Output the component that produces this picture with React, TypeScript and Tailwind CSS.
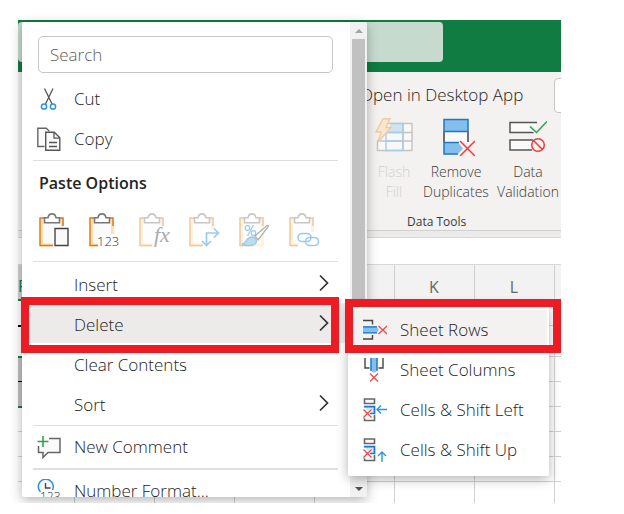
import React from "react";

type IconProps = { children: React.ReactNode; w: number; h: number };

function Icon({ children, w, h }: IconProps) {
  return (
    <svg width={w} height={h} viewBox={`0 0 ${w} ${h}`} fill="none" aria-hidden="true" className="block shrink-0">
      {children}
    </svg>
  );
}

const CutIcon = () => (
  <Icon w={24} h={24}>
    <path d="M7.5 1.5 15 17M16 1.5 8.500 17" stroke="#555" strokeWidth="1.300" />
    <circle cx="7" cy="19.500" r="2.600" stroke="#2b95d9" strokeWidth="1.500" />
    <circle cx="16" cy="19.500" r="2.600" stroke="#2b95d9" strokeWidth="1.500" />
  </Icon>
);

const CopyIcon = () => (
  <Icon w={24} h={24}>
    <path d="M7.500 19.500H.8V1.200h8.500l3 3" fill="#fafafa" stroke="#666" strokeWidth="1.400" />
    <path d="M8.700 5.200h8.600l5.500 5.500v12.500H8.700z" fill="#fafafa" stroke="#555" strokeWidth="1.400" />
    <path d="M17 5.500v5.700h5.500M12 15.500h8M12 19.500h8" stroke="#555" strokeWidth="1.300" />
  </Icon>
);

const CommentIcon = () => (
  <Icon w={24} h={24}>
    <path d="M12 3.500h11v14H11l-5 5v-5H1.500V11" fill="#fafafa" stroke="#666" strokeWidth="1.500" />
    <path d="M6.500 0v12M0 6.500h12" stroke="#fff" strokeWidth="4" />
    <path d="M6 1v11M.5 6.500h11" stroke="#2ea052" strokeWidth="1.600" />
  </Icon>
);

const NumberIcon = () => (
  <Icon w={24} h={24}>
    <path d="M3.500 13A7.500 7.500 0 1 1 15.500 11" fill="#fafafa" stroke="#2b95d9" strokeWidth="1.500" />
    <path d="M8.500 4v5h5" stroke="#444" strokeWidth="1.400" />
    <text x="3" y="22" fontSize="12" fill="#333" className="font-['Open_Sans',sans-serif]">123</text>
  </Icon>
);

function Clipboard({ children, faded }: { children: React.ReactNode; faded?: boolean }) {
  return (
    <Icon w={32} h={36}>
      <g opacity={faded ? 0.42 : 1}>
        <path d="M2.500 6h21v26h-21z" fill="#fafafa" stroke="#fde0b0" strokeWidth="3" />
        <path d="M6 5H1v27.500h13M19.500 5H24v8" stroke="#e07b1a" strokeWidth="1.500" />
        <path d="M5.500 4.700h3.500C9.500 2 11 .9 13 .9s3.500 1.100 4 3.800h3.500v5h-15z" fill="#fff" stroke="#777" strokeWidth="1.600" />
      </g>
      {children}
    </Icon>
  );
}

const pasteOptions: { label: string; faded?: boolean; art: React.ReactNode }[] = [
  {
    label: "Paste",
    art: (
      <>
        <path d="M14 13h18v23H14z" fill="#fff" />
        <path d="M16 15.500h13v17H16z" fill="#fafafa" stroke="#444" strokeWidth="1.400" />
      </>
    ),
  },
  {
    label: "Paste values",
    art: (
      <>
        <path d="M9 21h23v15H9z" fill="#fff" />
        <text x="8" y="33" fontSize="13" fill="#333" className="font-['Open_Sans',sans-serif]">123</text>
      </>
    ),
  },
  {
    label: "Paste formulas",
    faded: true,
    art: (
      <>
        <path d="M15 14h17v22H13z" fill="#fff" />
        <text x="15" y="29" fontSize="22" fontStyle="italic" fill="#aaa" className="font-['Liberation_Serif',serif]">fx</text>
      </>
    ),
  },
  {
    label: "Transpose",
    faded: true,
    art: (
      <>
        <path d="M14 16h18v20H14z" fill="#fff" />
        <path d="M17.500 32V20H29M13 28l4.500 4.500L22 28M25 15.500l4.500 4.500-4.500 4.500" stroke="#9ccbea" strokeWidth="1.700" />
      </>
    ),
  },
  {
    label: "Paste formatting",
    faded: true,
    art: (
      <>
        <circle cx="8.500" cy="15" r="2.300" stroke="#9ccbea" strokeWidth="1.200" />
        <circle cx="14.500" cy="20" r="2.300" stroke="#9ccbea" strokeWidth="1.200" />
        <path d="M14.500 12 8.500 23" stroke="#9ccbea" strokeWidth="1.200" />
        <path d="M16 23 28 12.500q2-.5 1 1.500L19 27z" fill="#fff" stroke="#b0b0b0" strokeWidth="1.300" />
        <path d="M3 31c4 0 4-7 10-7 4 0 6 4 3 7-3 2-9 2-13 0z" fill="#bcdcf2" stroke="#9ccbea" strokeWidth="1.400" />
      </>
    ),
  },
  {
    label: "Paste link",
    faded: true,
    art: (
      <>
        <path d="M9 19h22v16H9z" fill="#fff" />
        <rect x="9" y="20.500" width="13" height="8" rx="4" stroke="#9ccbea" strokeWidth="1.600" />
        <rect x="16.500" y="24.500" width="13" height="8" rx="4" stroke="#9ccbea" strokeWidth="1.600" />
      </>
    ),
  },
];

const Chevron = () => (
  <Icon w={12} h={18}>
    <path d="m2 1.500 7.500 7.500L2 16.500" stroke="#333" strokeWidth="1.700" />
  </Icon>
);

const DeleteRowsIcon = () => (
  <Icon w={24} h={24}>
    <path d="M0 2.500h9.500v4M0 21h9.500v-4" stroke="#444" strokeWidth="1.400" />
    <path d="M0 8.500h13.500l2.500 3.300-2.500 3.200H0z" fill="#83beec" />
    <path d="M0 8.800h14M0 14.800h14" stroke="#1a6fb8" strokeWidth="1.300" />
    <path d="m15.500 8 8.500 8M24 8l-8.500 8" stroke="#ee4b4b" strokeWidth="1.300" />
  </Icon>
);

const DeleteColumnsIcon = () => (
  <Icon w={24} h={26}>
    <path d="M2 1v10h4.500M20 1v10h-4.500" stroke="#444" strokeWidth="1.400" />
    <path d="M7.500 1v12l3.500 3 3.500-3V1z" fill="#83beec" />
    <path d="M8 1v13M14 1v13" stroke="#1a6fb8" strokeWidth="1.300" />
    <path d="m7 16.500 8 8M15 16.500l-8 8" stroke="#ee4b4b" strokeWidth="1.300" />
  </Icon>
);

function CellsIcon({ arrow }: { arrow: string }) {
  return (
    <Icon w={24} h={24}>
      <path d="M1.500 1h10v4.500h-10zM1.500 17v5.500h10V17" fill="#fff" stroke="#666" strokeWidth="1.600" />
      <path d="M1 8.700h10.500v6.800H7" fill="#cde6f8" stroke="#1a76c6" strokeWidth="1.700" />
      <path d="m.5 11.500 8 8M8.500 11.500l-8 8" stroke="#fff" strokeWidth="3" />
      <path d="m.5 11.500 8 8M8.500 11.500l-8 8" stroke="#ee4b4b" strokeWidth="1.400" />
      <path d={arrow} stroke="#2b95d9" strokeWidth="1.400" />
    </Icon>
  );
}

const FlashFillIcon = () => (
  <Icon w={38} h={38}>
    <path d="M12 5.500h25v27H2.500V22" fill="#f8f8f8" stroke="#c4c4c4" strokeWidth="1.400" />
    <path d="M16 5.500h12v9H11z" fill="#cfe3f1" />
    <path d="M2.500 23H37M9 14.500h28M28 5.500v27" stroke="#c4c4c4" strokeWidth="1.400" />
    <path d="M11 32.500v-18h17v18zM11 23h17M16 5.500h12v9" stroke="#a9cbe4" strokeWidth="1.400" />
    <path d="M8 .8h7L11 9.500h5L3 24l3-10H1z" fill="#fae6cb" stroke="#f0c9a6" strokeWidth="1.400" />
  </Icon>
);

const RemoveDuplicatesIcon = () => (
  <Icon w={38} h={38}>
    <path d="M7 1.500h24v12H7zM7 24.500h14l5 6-5 5.500H7z" fill="#83beec" />
    <path d="M7 13.500h24v11H7z" fill="#fafafa" />
    <path d="M31 24V13.500M7 13.500v11" stroke="#444" strokeWidth="1.500" />
    <path d="M7 1.500h24v12H7zM22 24.500H7V36h14" stroke="#1f78c1" strokeWidth="1.500" />
    <path d="m23 23 15 15M38 23 23 38" stroke="#ee3b3b" strokeWidth="1.500" />
  </Icon>
);

const DataValidationIcon = () => (
  <Icon w={38} h={38}>
    <path d="M28 4.500H1v10h24M24 22H1v10h22" fill="#fafafa" stroke="#555" strokeWidth="1.500" />
    <path d="m21 8.500 6.500 6L38 3.500" stroke="#f3f2f1" strokeWidth="4" />
    <path d="m21 8.500 6.500 6L38 3.500" stroke="#2ea052" strokeWidth="1.500" />
    <circle cx="29" cy="27" r="6.300" fill="#f3f2f1" stroke="#ee3b3b" strokeWidth="1.500" />
    <path d="m24.500 22.500 9 9" stroke="#ee3b3b" strokeWidth="1.500" />
  </Icon>
);

function Tool({ icon, lines, disabled, width }: { icon: React.ReactNode; lines: string[]; disabled?: boolean; width: string }) {
  return (
    <button
      type="button"
      disabled={disabled}
      className={`flex shrink-0 flex-col items-center text-sm leading-5 whitespace-nowrap ${width} ${disabled ? "text-[#d2d0ce]" : "text-[#3b3a39]"}`}
    >
      {icon}
      <span className="mt-1.5 flex flex-col items-center">
        {lines.map((l) => (
          <span key={l}>{l}</span>
        ))}
      </span>
    </button>
  );
}

function MenuItem({ icon, label, more, active, height = "h-10" }: { icon?: React.ReactNode; label: string; more?: boolean; active?: boolean; height?: string }) {
  return (
    <button
      type="button"
      className={`flex w-full shrink-0 items-center pr-5 pl-[15px] text-left text-[17px] ${height} ${active ? "bg-[#edebe9]" : ""}`}
    >
      <span className="w-[37px] shrink-0">{icon}</span>
      <span className={`grow ${icon ? "" : "pt-[3px]"}`}>{label}</span>
      {more && <Chevron />}
    </button>
  );
}

const Divider = ({ thick }: { thick?: boolean }) => (
  <hr className={`mr-3 ml-[11px] shrink-0 border-[#e1dfdd] ${thick ? "border-t-2" : ""}`} />
);

function SubItem({ icon, label, active }: { icon: React.ReactNode; label: string; active?: boolean }) {
  return (
    <button type="button" className={`flex h-10 w-full items-center gap-[13px] pl-[15px] text-left text-[17px] whitespace-nowrap ${active ? "bg-[#f3f2f1]" : ""}`}>
      {icon}
      <span>{label}</span>
    </button>
  );
}

const rowStyles = [
  "h-[26px] border-b-2 border-b-black",
  "h-[31px] border-b-2 border-b-[#107c41]",
  "h-[25px] border-b border-b-black bg-[#c0c0c0]",
  "h-[25px] border-b-2 border-b-[#107c41] bg-[#c0c0c0]",
  "h-[25px] border-b border-[#d0d0d0]",
  "h-[25px] border-b border-[#d0d0d0]",
  "h-[25px] border-b border-[#d0d0d0]",
  "h-[25px] border-b border-[#d0d0d0]",
];

function Sheet() {
  return (
    <table className="w-full table-fixed border-collapse bg-white">
      <colgroup>
        <col className="w-14" />
        {[0, 1, 2, 3, 4, 5].map((c) => (
          <col key={c} className="w-20" />
        ))}
        <col />
      </colgroup>
      <thead>
        <tr className="h-[34px] bg-[#f2f2f2] text-base text-[#666]">
          <th className="border-b-2 border-b-[#107c41] bg-[#d2d2d2] pt-2 text-left font-normal text-[#107c41]">F</th>
          {["", "", "", "", "K", "L", ""].map((h, i) => (
            <th key={i} className="border-b border-l border-[#d0d0d0] pt-2.5 font-normal">
              {h}
            </th>
          ))}
        </tr>
      </thead>
      <tbody>
        {rowStyles.map((cls, r) => (
          <tr key={r}>
            <td className={cls} />
            {[0, 1, 2, 3, 4, 5, 6].map((c) => (
              <td key={c} className="border-b border-l border-[#d0d0d0]" />
            ))}
          </tr>
        ))}
      </tbody>
    </table>
  );
}

function ContextMenu() {
  return (
    <div className="absolute top-[2px] left-1 flex h-[475px] w-[345px] overflow-hidden rounded-xs bg-white shadow-[0_3px_12px_rgba(0,0,0,0.3)]">
      <div className="flex min-w-0 grow flex-col">
        <input
          type="text"
          aria-label="Search"
          placeholder="Search"
          className="mr-[17px] mt-3.5 mb-1.5 ml-4 h-[37px] shrink-0 rounded-[5px] border border-[#c8c6c4] px-[11px] text-[17px] outline-none placeholder:text-[#605e5c]"
        />
        <MenuItem icon={<CutIcon />} label="Cut" />
        <MenuItem icon={<CopyIcon />} label="Copy" />
        <div className="mt-px flex shrink-0 flex-col">
          <Divider />
          <h2 className="mt-2 shrink-0 px-[17px] text-base leading-7 font-semibold text-[#252423]">Paste Options</h2>
          <div className="mt-4 mb-3 flex shrink-0 gap-[18px] px-[17px]">
            {pasteOptions.map((p) => (
              <button key={p.label} type="button" aria-label={p.label} disabled={p.faded}>
                <Clipboard faded={p.faded}>{p.art}</Clipboard>
              </button>
            ))}
          </div>
          <Divider />
        </div>
        <div className="shrink-0 pt-px pb-0.5">
          <MenuItem label="Insert" more />
          <MenuItem label="Delete" more active />
          <MenuItem label="Clear Contents" />
          <MenuItem label="Sort" more />
        </div>
        <Divider />
        <MenuItem icon={<CommentIcon />} label="New Comment" height="h-[42px]" />
        <Divider thick />
        <MenuItem icon={<NumberIcon />} label="Number Format..." height="h-[42px]" />
      </div>
      <div className="flex w-[17px] shrink-0 flex-col items-center bg-[#f1f1f1]">
        <div className="flex h-[17px] items-center">
          <Icon w={8} h={4}>
            <path d="m0 4 4-4 4 4z" fill="#a3a3a3" />
          </Icon>
        </div>
        <div className="h-[300px] w-[13px] bg-[#c1c1c1]" />
        <div className="mt-auto flex h-[17px] items-center">
          <Icon w={8} h={4}>
            <path d="m0 0 4 4 4-4z" fill="#505050" />
          </Icon>
        </div>
      </div>
    </div>
  );
}

export default function App() {
  return (
    <main className="bg-white pt-5 pr-[63px] pl-[18px] font-['Open_Sans','Noto_Sans',sans-serif] font-light text-[#252423]">
      <div className="relative h-[483px]">
        <div className="flex h-full flex-col overflow-hidden">
          <header className="h-[52px] shrink-0 bg-[#107c41] pt-[2px]">
            <div className="h-10 w-[425px] rounded-[4px] bg-[#c6dbce]" />
          </header>
          <section className="flex h-[159px] shrink-0 flex-col border-b border-[#d0d0d0] bg-[#f3f2f1]">
            <div className="flex h-[46px] shrink-0 items-center pl-[342px] whitespace-nowrap">
              <button type="button" className="w-[194px] shrink-0 text-left text-[17px]">
                Open in Desktop App
              </button>
              <div className="h-[35px] w-8 shrink-0 rounded-[4px] border border-[#c8c6c4] bg-white" />
            </div>
            <div className="flex pl-[350px]">
              <Tool icon={<FlashFillIcon />} lines={["Flash", "Fill"]} disabled width="w-[52px]" />
              <Tool icon={<RemoveDuplicatesIcon />} lines={["Remove", "Duplicates"]} width="w-[72px]" />
              <Tool icon={<DataValidationIcon />} lines={["Data", "Validation"]} width="w-[72px]" />
            </div>
            <p className="mt-2.5 pl-[389px] text-xs leading-5 font-normal whitespace-nowrap text-[#3b3a39]">Data Tools</p>
          </section>
          <div className="h-1.5 shrink-0 bg-[#ebebeb]" />
          <div className="h-7 shrink-0 border-y border-[#d8d8d8] bg-white" />
          <Sheet />
        </div>

        <ContextMenu />

        <div className="absolute top-[284px] left-[330px] w-[201px] rounded-xs bg-white py-1.5 pr-0.5 shadow-[0_3px_12px_rgba(0,0,0,0.3)]">
          <SubItem icon={<DeleteRowsIcon />} label="Sheet Rows" active />
          <SubItem icon={<DeleteColumnsIcon />} label="Sheet Columns" />
          <SubItem icon={<CellsIcon arrow="M24 11.500H14M18 7.500l-4 4 4 4" />} label="Cells &amp; Shift Left" />
          <SubItem icon={<CellsIcon arrow="M19 24V14M15 18l4-4 4 4" />} label="Cells &amp; Shift Up" />
        </div>

        <div className="pointer-events-none absolute top-[277px] left-[3px] h-14 w-[318px] border-8 border-[#ed1c24]" />
        <div className="pointer-events-none absolute top-[279px] left-[327px] h-[54px] w-[216px] border-8 border-[#ed1c24]" />
      </div>
    </main>
  );
}
